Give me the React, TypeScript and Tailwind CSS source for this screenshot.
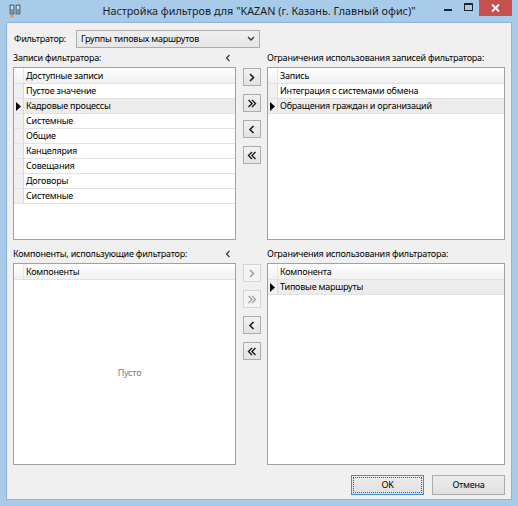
import React from 'react';

const font = { fontFamily: '"Noto Sans", "Open Sans", sans-serif' };

function Chevron({ dir, double, disabled }: { dir: 'left' | 'right'; double?: boolean; disabled?: boolean }) {
  const color = disabled ? '#a0a0a0' : '#1a1a1a';
  const one = (x: number) =>
    dir === 'right'
      ? `M${x} 1 L${x + 3.5} 4.5 L${x} 8`
      : `M${x + 3.5} 1 L${x} 4.5 L${x + 3.5} 8`;
  return (
    <svg width="10" height="9" viewBox="0 0 10 9">
      {double ? (
        <>
          <path d={one(1.5)} fill="none" stroke={color} strokeWidth="1.4" />
          <path d={one(5)} fill="none" stroke={color} strokeWidth="1.4" />
        </>
      ) : (
        <path d={one(3)} fill="none" stroke={color} strokeWidth="1.6" />
      )}
    </svg>
  );
}

function MoveButton({ dir, double, disabled }: { dir: 'left' | 'right'; double?: boolean; disabled?: boolean }) {
  return (
    <div
      className={
        'w-[18px] h-[18px] flex items-center justify-center border ' +
        (disabled ? 'border-[#d5d5d5] bg-[#f4f4f4]' : 'border-[#acacac] bg-gradient-to-b from-[#f2f2f2] to-[#e3e3e3]')
      }
    >
      <Chevron dir={dir} double={double} disabled={disabled} />
    </div>
  );
}

function Indicator() {
  return (
    <svg width="5" height="9" viewBox="0 0 5 9">
      <path d="M0 0 L5 4.5 L0 9 Z" fill="#000" />
    </svg>
  );
}

function Grid({ header, rows, selected, empty }: { header: string; rows: string[]; selected?: number; empty?: boolean }) {
  return (
    <div className="relative w-full h-full bg-white border border-[#a0a0a0] flex flex-col">
      <div className="flex h-[16px] border-b border-[#e2e2e2] bg-gradient-to-b from-[#ffffff] to-[#f1f1f1]">
        <div className="w-[10px] border-r border-[#e6e6e6]" />
        <div className="pl-[2px] leading-[15px]">{header}</div>
      </div>
      {rows.map((r, i) => (
        <div
          key={i}
          className={'flex h-[15px] border-b border-[#e2e2e2] ' + (i === selected ? 'bg-[#ececec]' : '')}
        >
          <div className="w-[10px] border-r border-[#d9d9d9] bg-[#f0f0f0] flex items-center justify-center">
            {i === selected ? <Indicator /> : null}
          </div>
          <div className="pl-[2px] leading-[14px]">{r}</div>
        </div>
      ))}
      {empty ? (
        <div className="flex-1 flex items-center justify-center pl-[10px] pt-[2px] text-[#7a7a7a]">Пусто</div>
      ) : null}
    </div>
  );
}

function Label({ text, collapse }: { text: string; collapse?: boolean }) {
  return (
    <div className="h-[14px] flex items-center justify-between leading-[14px]">
      <span>{text}</span>
      {collapse ? (
        <span className="pr-[5px]">
          <svg width="6" height="8" viewBox="0 0 6 8">
            <path d="M4.5 1 L1.5 4 L4.5 7" fill="none" stroke="#333" strokeWidth="1.2" />
          </svg>
        </span>
      ) : null}
    </div>
  );
}

export default function App() {
  return (
    <div
      className="w-[518px] h-[506px] bg-[#a9cbea] flex flex-col px-[6px] pb-[6px] text-[9px] tracking-[-0.22px] text-black"
      style={font}
    >
      {/* title bar */}
      <div className="relative h-[22px] flex items-center justify-center">
        <div className="absolute left-[3px] top-[4px]">
          <svg width="12" height="14" viewBox="0 0 12 14">
            <rect x="1" y="1" width="4" height="9" fill="#7f98b0" stroke="#4b5d70" strokeWidth="0.8" />
            <rect x="7" y="1" width="4" height="9" fill="#7f98b0" stroke="#4b5d70" strokeWidth="0.8" />
            <rect x="2" y="2" width="2" height="3" fill="#d8e4ef" />
            <rect x="8" y="2" width="2" height="3" fill="#d8e4ef" />
            <circle cx="3" cy="12" r="1.6" fill="#f08a24" />
          </svg>
        </div>
        <div className="text-[10.8px] tracking-normal text-[#1b1b1b] pt-[1px]">
          Настройка фильтров для "KAZAN (г. Казань. Главный офис)"
        </div>
        <div className="absolute right-0 top-0 flex items-start">
          <div className="w-[20px] h-[16px] flex items-center justify-center">
            <div className="w-[8px] h-[2px] bg-[#222] mt-[4px]" />
          </div>
          <div className="w-[20px] h-[16px] flex items-center justify-center">
            <div className="w-[9px] h-[8px] border border-[#222] border-t-[2px] mb-[2px]" />
          </div>
          <div className="ml-[1px] w-[33px] h-[16px] bg-[#c75050] flex items-center justify-center">
            <svg width="9" height="8" viewBox="0 0 9 8">
              <path d="M1 0.5 L8 7.5 M8 0.5 L1 7.5" stroke="#fff" strokeWidth="1.8" />
            </svg>
          </div>
        </div>
      </div>

      {/* client area */}
      <div className="flex-1 bg-[#f0f0f0] border border-[#8fb3d6] px-[6px] flex flex-col">
        {/* filter selector */}
        <div className="mt-[7px] h-[18px] flex items-center">
          <div className="w-[63px] pl-[1px]">Фильтратор:</div>
          <div className="w-[184px] h-[18px] border border-[#acacac] bg-gradient-to-b from-[#f0f0f0] to-[#e5e5e5] flex items-center justify-between pl-[4px] pr-[4px]">
            <span className="leading-[16px]">Группы типовых маршрутов</span>
            <svg width="8" height="6" viewBox="0 0 8 6">
              <path d="M1 1 L4 4 L7 1" fill="none" stroke="#333" strokeWidth="1.3" />
            </svg>
          </div>
        </div>

        {/* top section */}
        <div className="mt-[3px] flex">
          <div className="w-[223px] flex flex-col">
            <Label text="Записи фильтратора:" collapse />
          </div>
          <div className="w-[31px]" />
          <div className="w-[238px]">
            <Label text="Ограничения использования записей фильтратора:" />
          </div>
        </div>
        <div className="mt-[2px] h-[173px] flex">
          <div className="w-[223px] h-full">
            <Grid
              header="Доступные записи"
              rows={['Пустое значение', 'Кадровые процессы', 'Системные', 'Общие', 'Канцелярия', 'Совещания', 'Договоры', 'Системные']}
              selected={1}
            />
          </div>
          <div className="w-[31px] pl-[7px] pt-[1px] flex flex-col gap-[8px]">
            <MoveButton dir="right" />
            <MoveButton dir="right" double />
            <MoveButton dir="left" />
            <MoveButton dir="left" double />
          </div>
          <div className="w-[238px] h-full">
            <Grid header="Запись" rows={['Интеграция с системами обмена', 'Обращения граждан и организаций']} selected={1} />
          </div>
        </div>

        {/* bottom section */}
        <div className="mt-[7px] flex">
          <div className="w-[223px]">
            <Label text="Компоненты, использующие фильтратор:" collapse />
          </div>
          <div className="w-[31px]" />
          <div className="w-[238px]">
            <Label text="Ограничения использования фильтратора:" />
          </div>
        </div>
        <div className="mt-[2px] h-[202px] flex">
          <div className="w-[223px] h-full">
            <Grid header="Компоненты" rows={[]} empty />
          </div>
          <div className="w-[31px] pl-[7px] pt-[1px] flex flex-col gap-[8px]">
            <MoveButton dir="right" disabled />
            <MoveButton dir="right" double disabled />
            <MoveButton dir="left" />
            <MoveButton dir="left" double />
          </div>
          <div className="w-[238px] h-full">
            <Grid header="Компонента" rows={['Типовые маршруты']} selected={0} />
          </div>
        </div>

        {/* dialog buttons */}
        <div className="mt-[10px] flex justify-end gap-[8px]">
          <div className="w-[73px] h-[20px] border border-[#3c8fdd] bg-gradient-to-b from-[#ececec] to-[#e0e0e0] p-[1px]">
            <div className="w-full h-full border border-dotted border-[#555] flex items-center justify-center">OK</div>
          </div>
          <div className="w-[73px] h-[20px] border border-[#acacac] bg-gradient-to-b from-[#ececec] to-[#e0e0e0] flex items-center justify-center">
            Отмена
          </div>
        </div>
      </div>
    </div>
  );
}
